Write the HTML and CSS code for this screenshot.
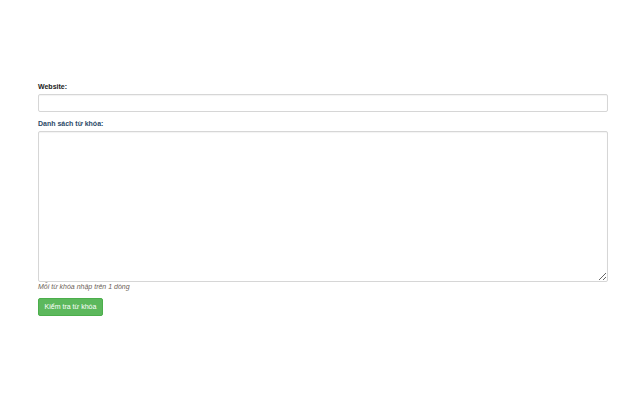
FILE: index.html
```html
<!DOCTYPE html>
<html lang="vi">
<head>
<meta charset="utf-8">
<title>Kiểm tra từ khóa</title>
<link rel="stylesheet" href="styles.css">
</head>
<body>
<form class="form">
  <div class="group">
    <label class="label" for="website">Website:</label>
    <input class="input" id="website" type="text">
  </div>
  <div class="group">
    <label class="label label-blue" for="keywords">Danh sách từ khóa:</label>
    <textarea class="input textarea" id="keywords"></textarea>
    <div class="help">Mỗi từ khóa nhập trên 1 dòng</div>
  </div>
  <button class="btn" type="button">Kiểm tra từ khóa</button>
</form>
</body>
</html>
```
FILE: styles.css
```css
html, body {
  margin: 0;
  background: #fff;
}
body {
  font-family: "Liberation Sans", Arial, sans-serif;
  font-size: 7px;
  line-height: 10px;
  color: #333;
}
.form {
  padding: 82px 0 0 38px;
  width: 570px;
}
.group {
  display: flex;
  flex-direction: column;
  margin-bottom: 7px;
}
.label {
  font-weight: bold;
  color: #1a1a1a;
  margin-bottom: 2px;
  height: 10px;
}
.label-blue {
  color: #2c4a68;
}
.input {
  box-sizing: border-box;
  width: 570px;
  height: 18px;
  margin: 0;
  padding: 2px 6px;
  border: 1px solid #d6d6d6;
  border-radius: 2px;
  box-shadow: inset 0 1px 1px rgba(0,0,0,0.05);
  font-family: inherit;
  font-size: 7px;
  background: #fff;
}
.textarea {
  height: 151px;
  resize: vertical;
  display: block;
}
.help {
  margin-top: 0;
  font-style: italic;
  color: #6e6258;
  height: 10px;
  margin-bottom: -1px;
}
.btn {
  display: block;
  box-sizing: border-box;
  height: 18px;
  width: 65px;
  padding: 0;
  margin: 0;
  border: 1px solid #4cae4c;
  border-radius: 2px;
  background: #5cb85c;
  color: #fff;
  font-family: inherit;
  font-size: 7px;
  line-height: 16px;
  text-align: center;
}
```
